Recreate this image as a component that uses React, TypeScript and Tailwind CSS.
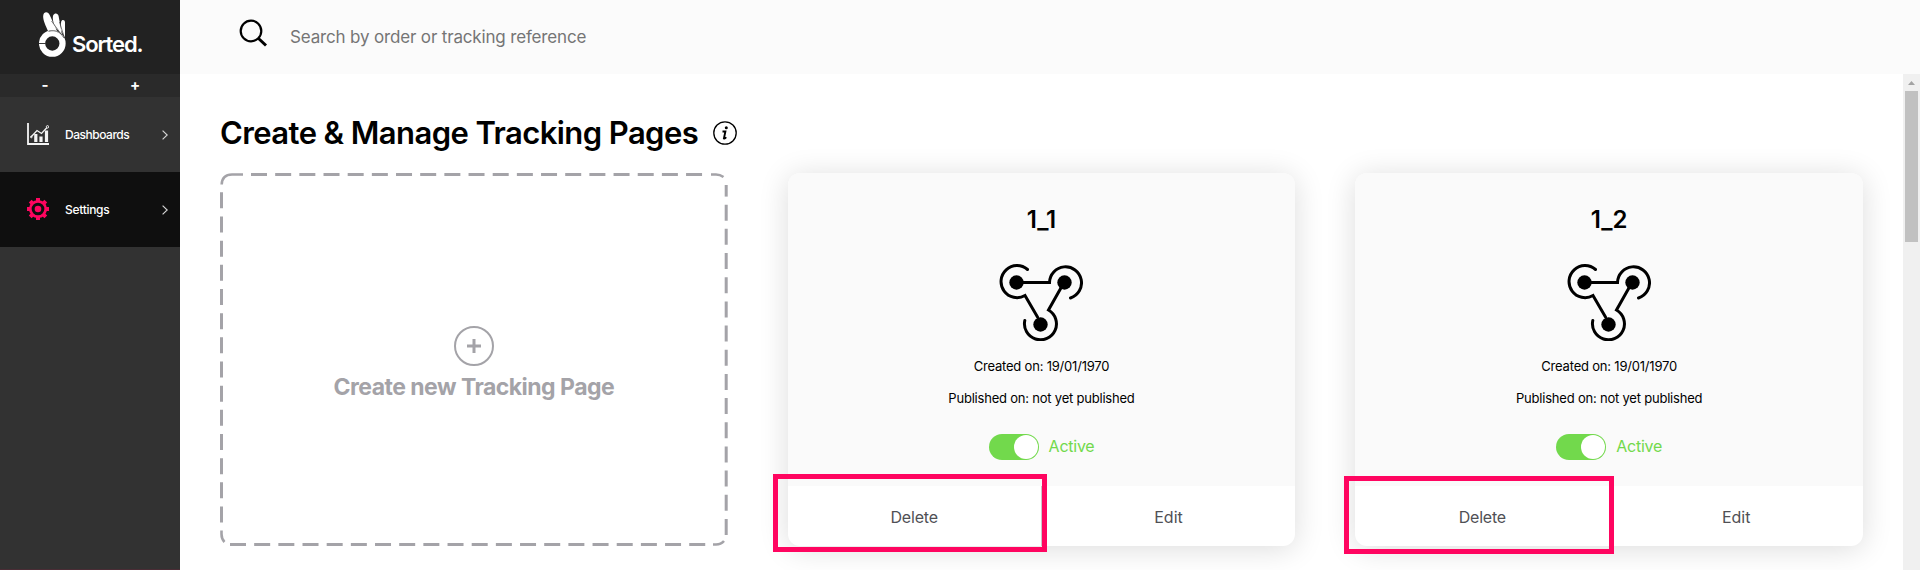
import React from "react";

const cards = [
  { name: "1_1", box: "-left-[15px] top-[301px] w-[274px] h-[78px]", divider: true },
  { name: "1_2", box: "-left-[11px] top-[303px] w-[270px] h-[78px]", divider: false },
];

function Logo() {
  return (
    <svg width="28" height="46" viewBox="0 0 28 46" fill="none">
      <path d="M5 1.200c2-1.800 4.600-.8 5.800 2L18 19c-4-1-7-1-9 0C6 12 2.500 5 5 1.200z" fill="#fff" />
      <path d="M14.300 3c1.400-2.400 4.700-2 5.300 1L23 23 16 15c-1.500-4-3-9-1.700-12z" fill="#fff" />
      <path d="M22.300 9.500c.9-2.200 3.500-1.800 3.700 1L26 26l-4-8c-.5-3-.6-6 .3-8.500z" fill="#fff" />
      <circle cx="13.300" cy="31.500" r="10.250" stroke="#fff" strokeWidth="6.200" />
      <path d="M0 31.500h6.500" stroke="#222" strokeWidth="0.9" />
      <path d="M12.500 9l12.500 17M20.500 10l5 16M9.500 19.500c4-1.500 9-.8 13 3" stroke="#222" strokeWidth="0.600" />
    </svg>
  );
}

function ChartIcon() {
  return (
    <svg width="22" height="22" viewBox="0 0 22 22" fill="none" stroke="#f4f4f4">
      <path d="M1 0v21h21" strokeWidth="1.800" />
      <path d="M8.800 19v-8M14 19v-5.500M19.500 19V7.500" strokeWidth="3.200" />
      <path d="M4 14l6-6.500 4.500 3L20 4.500" strokeWidth="1.300" />
      <circle cx="20.500" cy="3.800" r="1.200" fill="#323232" />
      <circle cx="4.300" cy="14" r=".8" />
    </svg>
  );
}

function GearIcon() {
  return (
    <svg width="22" height="22" viewBox="0 0 22 22" fill="none" stroke="#ff0560">
      <circle cx="11" cy="11" r="7.700" strokeWidth="2.700" />
      <path
        strokeWidth="4"
        d="M11 0v3M11 19v3M0 11h3M19 11h3M3.200 3.200l2 2M16.800 16.800l2 2M3.200 18.800l2-2M16.800 5.200l2-2"
      />
      <circle cx="11" cy="11" r="3.300" fill="#ff0560" stroke="none" />
    </svg>
  );
}

function Chevron() {
  return (
    <svg width="6" height="10" viewBox="0 0 6 10" fill="none" stroke="#d4d4d4" strokeWidth="1.200">
      <path d="M.6.6L5.200 5 .6 9.400" />
    </svg>
  );
}

function NodesIcon() {
  return (
    <svg width="84" height="78" viewBox="0 0 84 78" fill="none" stroke="#000" strokeWidth="3" strokeLinecap="round">
      <path d="M28.500 6.500A16 16 0 1 0 26 32.500L38.500 54" />
      <path d="M18 19.500H50.500A16 16 0 1 1 71.500 35" />
      <path d="M65 19.500L49.500 47A16 16 0 1 1 25.800 57.500" />
      <g fill="#000" stroke="none">
        <circle cx="17.500" cy="19.500" r="7.200" />
        <circle cx="65.500" cy="19.500" r="7.200" />
        <circle cx="41.500" cy="61.500" r="7.200" />
      </g>
    </svg>
  );
}

function DashedFrame() {
  return (
    <svg className="absolute inset-0" width="508" height="373" fill="none" stroke="#a4a3a8" strokeWidth="3">
      <g strokeDasharray="16 8.170">
        <path d="M31 1.500H490" />
        <path d="M506.200 31.700V363" />
        <path d="M10 371.500H487" />
        <path d="M1.500 19.300V351" />
      </g>
      <path d="M506.200 12V23.600" />
      <g strokeWidth="2.600">
        <path d="M1.700 11.500Q2 1.700 12 1.500H23" />
        <path d="M491 1.500H496Q500 1.500 503.500 4" />
        <path d="M493 371.500H496Q501 371.500 504 368" />
        <path d="M1.500 357.600V361Q1.500 366 4.500 369" />
      </g>
    </svg>
  );
}

function NavItem({ label, icon, active }: { label: string; icon: React.ReactNode; active?: boolean }) {
  return (
    <a className={`flex h-[75px] items-center pr-[12px] pl-[27px] ${active ? "bg-[#0f0f0f]" : "bg-[#323232]"}`}>
      <span className="-mt-[2px]">{icon}</span>
      <span className={`ml-[16px] flex-1 text-[12px] leading-4 font-medium text-white ${active ? "tracking-[-0.3px]" : "tracking-[-0.48px]"}`}>
        {label}
      </span>
      <Chevron />
    </a>
  );
}

function PageCard({ name, divider, box }: (typeof cards)[number]) {
  return (
    <article className="relative h-[373px] rounded-[12px] bg-white shadow-[0_3px_30px_rgba(0,0,0,0.14)]">
      <div className="flex h-[313px] flex-col items-center rounded-t-[12px] bg-[#fafafa]">
        <h2 className="mt-[31px] text-[24px] leading-[32px] font-semibold">{name}</h2>
        <div className="mt-[27px] h-[78px]"><NodesIcon /></div>
        <p className="mt-[15px] text-[13px] leading-[20px] tracking-[-0.2px]">Created on: 19/01/1970</p>
        <p className="mt-[12px] text-[13px] leading-[20px] tracking-[-0.21px]">Published on: not yet published</p>
        <div className="mt-[26px] flex h-[26px] items-center gap-[10px]">
          <span className="flex h-[26px] w-[50px] justify-end rounded-full bg-[#72d94c] p-[1px]">
            <span className="size-[24px] rounded-full bg-white" />
          </span>
          <span className="-mt-[2px] text-[16px] tracking-[-0.25px] text-[#72d94c]">Active</span>
        </div>
      </div>
      <div className="grid h-[60px] grid-cols-[254px_1fr] text-[16px] text-[#505055]">
        <button className={`pt-[2px] tracking-[-0.2px] ${divider ? "border-r border-[#c8c8c8]" : ""}`}>Delete</button>
        <button className="pt-[2px]">Edit</button>
      </div>
      <div className={`absolute border-[5px] border-[#ff0560] ${box}`} />
    </article>
  );
}

export default function App() {
  return (
    <div className="flex h-[570px] w-[1920px] overflow-hidden bg-white font-['Inter',sans-serif] text-black">
      <aside className="flex w-[180px] shrink-0 flex-col border-b border-[#4a2c35] bg-[#323232]">
        <div className="flex h-[74px] items-start bg-[#222222] pt-[12px] pl-[39px]">
          <Logo />
          <span className="mt-[18px] ml-[5px] text-[22px] leading-[28px] font-semibold tracking-[-1.1px] text-white">Sorted.</span>
        </div>
        <div className="grid h-[23px] grid-cols-2 place-items-center bg-[#2a2a2a] pb-[2px] text-[15px] leading-none font-bold text-white">
          <span>-</span>
          <span>+</span>
        </div>
        <NavItem label="Dashboards" icon={<ChartIcon />} />
        <NavItem label="Settings" icon={<GearIcon />} active />
      </aside>
      <div className="flex min-w-0 flex-1 flex-col">
        <header className="flex h-[74px] shrink-0 items-center bg-[#fbfbfb] pl-[59px]">
          <svg className="-mt-[8px]" width="29" height="28" viewBox="0 0 29 28" fill="none" stroke="#000">
            <circle cx="12" cy="12" r="10.300" strokeWidth="2.200" />
            <path d="M19 19l8 7.500" strokeWidth="3" />
          </svg>
          <span className="mt-[2px] ml-[22px] text-[17px] tracking-[-0.16px] text-[#757575]">Search by order or tracking reference</span>
        </header>
        <div className="flex min-h-0 flex-1">
          <main className="flex-1 overflow-hidden pt-[38px] pr-[40px] pl-[40px]">
            <div className="flex h-[42px] items-center">
              <h1 className="text-[31px] font-semibold tracking-[-0.58px] whitespace-nowrap">Create &amp; Manage Tracking Pages</h1>
              <svg className="ml-[15px]" width="24" height="24" viewBox="0 0 24 24" fill="none">
                <circle cx="12" cy="12" r="11.200" stroke="#000" strokeWidth="1.300" />
                <circle cx="13.300" cy="6.800" r="1.500" fill="#000" />
                <path d="M9.500 10.500h2.900l-1.500 7q1 .6 2.300-1.200" stroke="#000" strokeWidth="1.900" />
              </svg>
            </div>
            <div className="mt-[19px] grid grid-cols-3 gap-[60px]">
              <div className="relative flex h-[373px] flex-col items-center text-[#a4a3a8]">
                <DashedFrame />
                <svg className="mt-[153px]" width="40" height="40" fill="none" stroke="#a4a3a8">
                  <circle cx="20" cy="20" r="19" strokeWidth="2" />
                  <path d="M13 20h14M20 13v14" strokeWidth="3" />
                </svg>
                <span className="mt-[5px] text-[23px] leading-[32px] font-bold tracking-[-0.52px]">Create new Tracking Page</span>
              </div>
              {cards.map((c) => <PageCard key={c.name} {...c} />)}
            </div>
          </main>
          <div className="flex w-[17px] flex-col items-center bg-[#f0f0f0] pt-[7px]">
            <svg width="7" height="4"><path d="M0 4L3.500 0 7 4z" fill="#a3a3a3" /></svg>
            <div className="mt-[6px] h-[151px] w-[13px] bg-[#c1c1c1]" />
          </div>
        </div>
      </div>
    </div>
  );
}
